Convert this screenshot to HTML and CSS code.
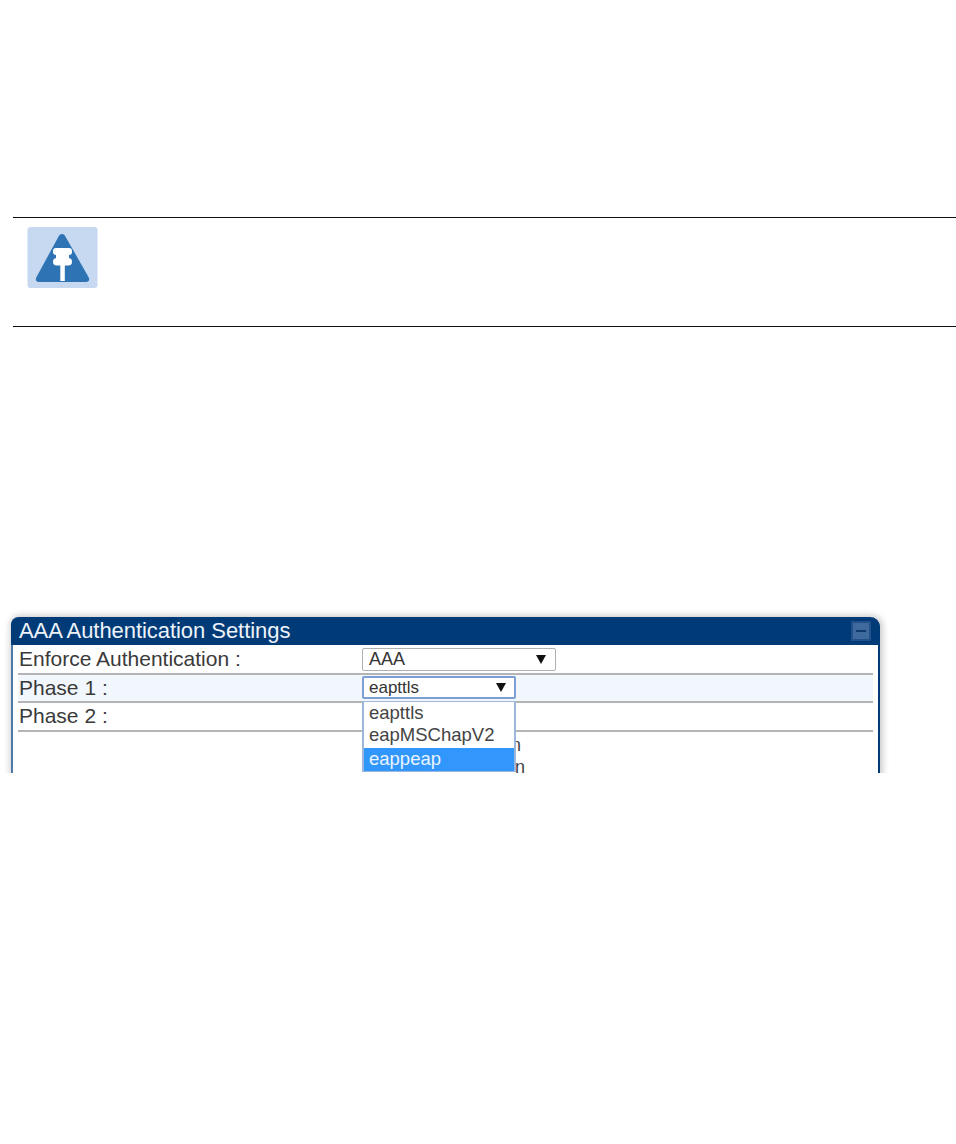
FILE: index.html
```html
<!DOCTYPE html>
<html lang="en">
<head>
<meta charset="utf-8">
<title>AAA Authentication Settings</title>
<link rel="stylesheet" href="styles.css">
</head>
<body>
<div class="note">
  <svg class="note-icon" width="71" height="62" viewBox="0 0 71 62" aria-hidden="true">
    <rect x="0.5" y="0" width="70" height="61" rx="3" fill="#c6d9f1"/>
    <path d="M35 7 C33.200 7 32.300 8 31.300 10 L9.500 50 C8 53 9 55 12 55 L59 55 C62 55 63 53 61.500 50 L38.700 10 C37.700 8 36.800 7 35 7 Z" fill="#2e74b5"/>
    <rect x="26" y="21" width="19" height="7" rx="3" fill="#fff"/>
    <rect x="29" y="26" width="13" height="7" fill="#fff"/>
    <rect x="26" y="31" width="19" height="7.500" rx="3.750" fill="#fff"/>
    <rect x="33.300" y="37" width="4.500" height="17" fill="#fff"/>
  </svg>
</div>
<div class="shot">
  <section class="panel">
    <header class="panel-title">
      <h2>AAA Authentication Settings</h2>
      <span class="collapse"><span class="collapse-bar"></span></span>
    </header>
    <div class="panel-body">
      <div class="row">
        <span class="label">Enforce Authentication :</span>
        <div class="select select-wide"><span>AAA</span><i class="arrow"></i></div>
      </div>
      <div class="row row-alt">
        <span class="label">Phase 1 :</span>
        <div class="select select-open"><span>eapttls</span><i class="arrow"></i></div>
      </div>
      <div class="row">
        <span class="label">Phase 2 :</span>
      </div>
    </div>
    <span class="behind behind-a">n</span>
    <span class="behind behind-b">n</span>
    <ul class="menu">
      <li>eapttls</li>
      <li>eapMSChapV2</li>
      <li class="active">eappeap</li>
    </ul>
  </section>
</div>
</body>
</html>
```
FILE: styles.css
```css
html, body {
  margin: 0;
  padding: 0;
  background: #fff;
}

body {
  height: 1144px;
  overflow: hidden;
  font-family: "Liberation Sans", Arial, sans-serif;
  color: #333;
}

.note {
  box-sizing: border-box;
  margin: 217px 0 0 13px;
  height: 110px;
  padding: 9px 0 0 14px;
  border-top: 1px solid #111;
  border-bottom: 1px solid #111;
}

.note-icon {
  display: block;
}

.shot {
  margin-top: 280px;
  height: 156px;
  padding: 10px 0 0 11px;
  overflow: hidden;
}

.panel {
  position: relative;
  box-sizing: border-box;
  width: 869px;
  height: 240px;
  border: 2px solid #003b78;
  border-top: 0;
  border-left-color: #4f7aa8;
  border-radius: 8px 10px 0 0;
  box-shadow: 1px 0 6px 2px rgba(0, 0, 0, 0.2);
  background: #fff;
}

.panel-title {
  display: flex;
  align-items: center;
  justify-content: space-between;
  height: 28px;
  margin: 0 -2px;
  padding: 0 9px 0 8px;
  background: #003b78;
  border-radius: 8px 10px 0 0;
}

.panel-title h2 {
  margin: 0;
  font-size: 22px;
  font-weight: 400;
  color: #eef3f9;
  letter-spacing: -0.05px;
}

.collapse {
  box-sizing: border-box;
  display: flex;
  align-items: center;
  justify-content: center;
  width: 20px;
  height: 20px;
  background: #3e6a9e;
  border: 2px solid #22508a;
}

.collapse-bar {
  width: 10px;
  height: 2px;
  background: #0f3a6e;
}

.panel-body {
  padding: 1px 5px 0;
}

.row {
  box-sizing: border-box;
  display: flex;
  align-items: center;
  height: 28.500px;
  border-bottom: 2px solid #b4b4b4;
  position: relative;
}

.row-alt {
  background: #f2f7fd;
}

.label {
  width: 343px;
  padding-left: 1px;
  font-size: 21px;
  color: #3a3a3a;
}

.select {
  box-sizing: border-box;
  display: flex;
  align-items: center;
  justify-content: space-between;
  height: 23px;
  padding: 0 9px 0 6px;
  background: #fff;
  border: 1px solid #b0b0b0;
  border-radius: 2px;
  font-size: 18px;
  color: #333;
}

.select-wide {
  width: 194px;
}

.select-open {
  width: 154px;
  border: 2px solid #7d9fd3;
  padding-left: 5px;
  padding-right: 8px;
  font-size: 17px;
}

.select-open span {
  padding-top: 1px;
}

.arrow {
  width: 0;
  height: 0;
  border-left: 5px solid transparent;
  border-right: 5px solid transparent;
  border-top: 9px solid #111;
}

.behind {
  position: absolute;
  font-size: 18px;
  color: #444;
}

.behind-a {
  left: 498px;
  top: 118px;
}

.behind-b {
  left: 502px;
  top: 140px;
}

.menu {
  position: absolute;
  left: 349px;
  top: 84px;
  box-sizing: border-box;
  width: 154px;
  margin: 0;
  padding: 0;
  list-style: none;
  background: #fff;
  border: 1px solid #9db6dc;
  border-width: 1px 2px;
  font-size: 18.500px;
  color: #444;
}

.menu li {
  box-sizing: border-box;
  height: 22px;
  line-height: 22px;
  padding-left: 5px;
}

.menu li.active {
  margin-top: 2px;
  height: 23px;
  background: #3297fd;
  color: #eaf4ff;
}
```
